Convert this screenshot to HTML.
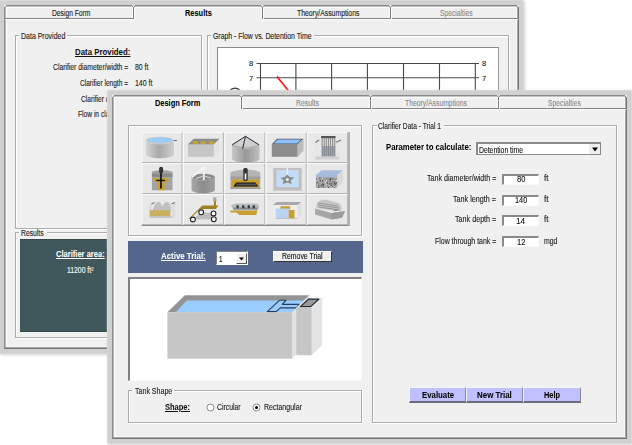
<!DOCTYPE html>
<html><head><meta charset="utf-8"><style>
html,body{margin:0;padding:0;width:632px;height:445px;overflow:hidden;background:#fff;position:relative}
div{position:absolute;box-sizing:border-box}
.t{font-family:"Liberation Sans", sans-serif;white-space:nowrap;transform-origin:0 0;-webkit-text-stroke:0.12px currentColor}
#wrap{left:0;top:0;width:632px;height:445px;filter:blur(0.35px)}
</style></head><body><div id="wrap">
<div style="left:0px;top:1px;width:523px;height:352px;background:#d0d0d0;box-shadow:0 0 0.8px 0.5px #d8d8d8, 1px 1px 3px 0.5px rgba(205,205,205,0.85);border-radius:1px"></div>
<div style="left:4px;top:5px;width:515px;height:344px;background:#f0f0f0;"></div>
<div style="left:6px;top:5px;width:511px;height:1px;background:#888888;"></div>
<div style="left:4px;top:7px;width:1px;height:342px;background:#8c8c8c;"></div>
<div style="left:5px;top:6px;width:1px;height:1px;background:#9a9a9a;"></div>
<div style="left:517px;top:6px;width:1px;height:1px;background:#8a8a8a;"></div>
<div style="left:518px;top:7px;width:1px;height:342px;background:#787878;"></div>
<div style="left:4px;top:348px;width:515px;height:1px;background:#787878;"></div>
<div style="left:5px;top:7px;width:1px;height:341px;background:#bababa;"></div>
<div style="left:6px;top:6px;width:511px;height:1px;background:#c4c4c4;"></div>
<div style="left:517px;top:7px;width:1px;height:341px;background:#a4a4a4;"></div>
<div style="left:5px;top:347px;width:513px;height:1px;background:#a4a4a4;"></div>
<div style="left:6px;top:7px;width:1px;height:340px;background:#fcfcfc;"></div>
<div style="left:6px;top:7px;width:511px;height:1px;background:#fcfcfc;"></div>
<div style="left:516px;top:7px;width:1px;height:340px;background:#f8f8f8;"></div>
<div style="left:6px;top:346px;width:511px;height:1px;background:#f8f8f8;"></div>
<div style="left:4px;top:18px;width:130px;height:1px;background:#828282;"></div>
<div style="left:5px;top:19px;width:128px;height:1px;background:#fcfcfc;"></div>
<div style="left:133px;top:7px;width:1px;height:12px;background:#7e7e7e;"></div>
<div style="left:134px;top:8px;width:1px;height:11px;background:#fcfcfc;"></div>
<div style="left:132px;top:8px;width:1px;height:10px;background:#fafafa;"></div>
<div style="left:132px;top:5px;width:3px;height:1px;background:#d8d8d8;"></div>
<div style="left:132px;top:6px;width:1px;height:1px;background:#8e8e8e;"></div>
<div style="left:134px;top:6px;width:1px;height:1px;background:#8e8e8e;"></div>
<div style="left:133px;top:6px;width:1px;height:1px;background:#e4e4e4;"></div>
<div style="left:262px;top:18px;width:129px;height:1px;background:#828282;"></div>
<div style="left:263px;top:19px;width:127px;height:1px;background:#fcfcfc;"></div>
<div style="left:262px;top:7px;width:1px;height:12px;background:#7e7e7e;"></div>
<div style="left:263px;top:8px;width:1px;height:11px;background:#fcfcfc;"></div>
<div style="left:261px;top:8px;width:1px;height:10px;background:#fafafa;"></div>
<div style="left:261px;top:5px;width:3px;height:1px;background:#d8d8d8;"></div>
<div style="left:261px;top:6px;width:1px;height:1px;background:#8e8e8e;"></div>
<div style="left:263px;top:6px;width:1px;height:1px;background:#8e8e8e;"></div>
<div style="left:262px;top:6px;width:1px;height:1px;background:#e4e4e4;"></div>
<div style="left:390px;top:18px;width:129px;height:1px;background:#828282;"></div>
<div style="left:391px;top:19px;width:127px;height:1px;background:#fcfcfc;"></div>
<div style="left:390px;top:7px;width:1px;height:12px;background:#7e7e7e;"></div>
<div style="left:391px;top:8px;width:1px;height:11px;background:#fcfcfc;"></div>
<div style="left:389px;top:8px;width:1px;height:10px;background:#fafafa;"></div>
<div style="left:389px;top:5px;width:3px;height:1px;background:#d8d8d8;"></div>
<div style="left:389px;top:6px;width:1px;height:1px;background:#8e8e8e;"></div>
<div style="left:391px;top:6px;width:1px;height:1px;background:#8e8e8e;"></div>
<div style="left:390px;top:6px;width:1px;height:1px;background:#e4e4e4;"></div>
<div class="t" style="left:51.60px;top:8.90px;font-size:8.5px;line-height:8.5px;color:#222;transform:scaleX(0.7892);">Design Form</div>
<div class="t" style="left:185.00px;top:9.40px;font-size:8.5px;line-height:8.5px;color:#000;transform:scaleX(0.8724);font-weight:700;-webkit-text-stroke:0.05px currentColor;">Results</div>
<div class="t" style="left:297.00px;top:8.90px;font-size:8.5px;line-height:8.5px;color:#222;transform:scaleX(0.8053);">Theory/Assumptions</div>
<div class="t" style="left:439.60px;top:8.90px;font-size:8.5px;line-height:8.5px;color:#8a8a8a;transform:scaleX(0.7930);">Specialties</div>
<div style="left:15px;top:35px;width:187px;height:1px;background:#acacac;"></div>
<div style="left:16px;top:36px;width:186px;height:1px;background:#ffffff;"></div>
<div style="left:15px;top:35px;width:1px;height:194px;background:#acacac;"></div>
<div style="left:16px;top:36px;width:1px;height:192px;background:#ffffff;"></div>
<div style="left:15px;top:228px;width:187px;height:1px;background:#acacac;"></div>
<div style="left:15px;top:229px;width:188px;height:1px;background:#ffffff;"></div>
<div style="left:201px;top:35px;width:1px;height:194px;background:#acacac;"></div>
<div style="left:202px;top:35px;width:1px;height:195px;background:#ffffff;"></div>
<div style="left:19px;top:35px;width:48px;height:2px;background:#f0f0f0;"></div>
<div class="t" style="left:21.00px;top:32.10px;font-size:8.5px;line-height:8.5px;color:#222;transform:scaleX(0.8223);">Data Provided</div>
<div class="t" style="left:75.30px;top:48.10px;font-size:8.5px;line-height:8.5px;color:#111;transform:scaleX(0.9233);font-weight:700;-webkit-text-stroke:0.05px currentColor;text-decoration:underline;">Data Provided:</div>
<div class="t" style="left:52.80px;top:63.10px;font-size:8.5px;line-height:8.5px;color:#222;transform:scaleX(0.7979);">Clarifier diameter/width =</div>
<div class="t" style="left:134.80px;top:63.10px;font-size:8.5px;line-height:8.5px;color:#222;transform:scaleX(0.8098);">80 ft</div>
<div class="t" style="left:80.00px;top:79.20px;font-size:8.5px;line-height:8.5px;color:#222;transform:scaleX(0.7724);">Clarifier length =</div>
<div class="t" style="left:134.80px;top:79.20px;font-size:8.5px;line-height:8.5px;color:#222;transform:scaleX(0.8176);">140 ft</div>
<div class="t" style="left:81.00px;top:94.50px;font-size:8.5px;line-height:8.5px;color:#222;transform:scaleX(0.7801);">Clarifier depth =</div>
<div class="t" style="left:134.80px;top:94.50px;font-size:8.5px;line-height:8.5px;color:#222;transform:scaleX(0.8098);">14 ft</div>
<div class="t" style="left:77.90px;top:110.00px;font-size:8.5px;line-height:8.5px;color:#222;transform:scaleX(0.7826);">Flow in clarifier =</div>
<div class="t" style="left:134.80px;top:110.00px;font-size:8.5px;line-height:8.5px;color:#222;transform:scaleX(0.7405);">12 mgd</div>
<div style="left:15px;top:232px;width:187px;height:1px;background:#acacac;"></div>
<div style="left:16px;top:233px;width:186px;height:1px;background:#ffffff;"></div>
<div style="left:15px;top:232px;width:1px;height:106px;background:#acacac;"></div>
<div style="left:16px;top:233px;width:1px;height:104px;background:#ffffff;"></div>
<div style="left:15px;top:337px;width:187px;height:1px;background:#acacac;"></div>
<div style="left:15px;top:338px;width:188px;height:1px;background:#ffffff;"></div>
<div style="left:201px;top:232px;width:1px;height:106px;background:#acacac;"></div>
<div style="left:202px;top:232px;width:1px;height:107px;background:#ffffff;"></div>
<div style="left:19px;top:232px;width:28px;height:2px;background:#f0f0f0;"></div>
<div class="t" style="left:21.10px;top:228.90px;font-size:8.5px;line-height:8.5px;color:#222;transform:scaleX(0.7974);">Results</div>
<div style="left:20px;top:239px;width:87px;height:93px;background:#40585c;border-top:1px dotted #2a3a3c;border-bottom:1px dotted #2a3a3c"></div>
<div class="t" style="left:55.50px;top:249.80px;font-size:8.5px;line-height:8.5px;color:#fff;transform:scaleX(0.8885);font-weight:700;-webkit-text-stroke:0.05px currentColor;text-decoration:underline;">Clarifier area:</div>
<div class="t" style="left:66.70px;top:265.90px;font-size:8.5px;line-height:8.5px;color:#fff;transform:scaleX(0.8019);-webkit-text-stroke:0.1px currentColor;">11200 ft&#178;</div>
<div style="left:207px;top:35px;width:302px;height:1px;background:#acacac;"></div>
<div style="left:208px;top:36px;width:301px;height:1px;background:#ffffff;"></div>
<div style="left:207px;top:35px;width:1px;height:303px;background:#acacac;"></div>
<div style="left:208px;top:36px;width:1px;height:301px;background:#ffffff;"></div>
<div style="left:207px;top:337px;width:302px;height:1px;background:#acacac;"></div>
<div style="left:207px;top:338px;width:303px;height:1px;background:#ffffff;"></div>
<div style="left:508px;top:35px;width:1px;height:303px;background:#acacac;"></div>
<div style="left:509px;top:35px;width:1px;height:304px;background:#ffffff;"></div>
<div style="left:211px;top:35px;width:103px;height:2px;background:#f0f0f0;"></div>
<div class="t" style="left:213.10px;top:32.30px;font-size:8.5px;line-height:8.5px;color:#222;transform:scaleX(0.8097);">Graph - Flow vs. Detention Time</div>
<div style="left:217px;top:47px;width:282px;height:290px;background:#ffffff;border-top:1px solid #8a8a8a;border-left:1px solid #8a8a8a;border-right:1px solid #9a9a9a;box-sizing:border-box"></div>
<svg style="position:absolute;left:0;top:0" width="632" height="445"><line x1="260.5" y1="63" x2="260.5" y2="200" stroke="#484848" stroke-width="1.1"/><line x1="295.9" y1="63" x2="295.9" y2="200" stroke="#484848" stroke-width="1.1"/><line x1="331.6" y1="63" x2="331.6" y2="200" stroke="#484848" stroke-width="1.1"/><line x1="367.4" y1="63" x2="367.4" y2="200" stroke="#484848" stroke-width="1.1"/><line x1="403.5" y1="63" x2="403.5" y2="200" stroke="#484848" stroke-width="1.1"/><line x1="439.5" y1="63" x2="439.5" y2="200" stroke="#484848" stroke-width="1.1"/><line x1="475.3" y1="63" x2="475.3" y2="200" stroke="#484848" stroke-width="1.1"/><line x1="256.5" y1="63.5" x2="479" y2="63.5" stroke="#484848" stroke-width="1.1"/><line x1="256.5" y1="77.8" x2="479" y2="77.8" stroke="#484848" stroke-width="1.1"/><line x1="256.5" y1="92.2" x2="479" y2="92.2" stroke="#484848" stroke-width="1.1"/><line x1="256.5" y1="106.6" x2="479" y2="106.6" stroke="#484848" stroke-width="1.1"/><line x1="276.9" y1="76.5" x2="300" y2="105" stroke="#ff1010" stroke-width="1.6"/><path d="M230.5 89.8 Q235 86.3 239.5 89.8" stroke="#333" stroke-width="1.3" fill="none"/></svg>
<div class="t" style="left:248.70px;top:60.35px;font-size:7.5px;line-height:7.5px;color:#1a2030;transform:scaleX(1.0067);-webkit-text-stroke:0.1px currentColor;">8</div>
<div class="t" style="left:481.90px;top:60.35px;font-size:7.5px;line-height:7.5px;color:#1a2030;transform:scaleX(1.0067);-webkit-text-stroke:0.1px currentColor;">8</div>
<div class="t" style="left:248.70px;top:74.75px;font-size:7.5px;line-height:7.5px;color:#1a2030;transform:scaleX(1.0067);-webkit-text-stroke:0.1px currentColor;">7</div>
<div class="t" style="left:481.90px;top:74.75px;font-size:7.5px;line-height:7.5px;color:#1a2030;transform:scaleX(1.0067);-webkit-text-stroke:0.1px currentColor;">7</div>
<div class="t" style="left:248.70px;top:89.15px;font-size:7.5px;line-height:7.5px;color:#1a2030;transform:scaleX(1.0067);-webkit-text-stroke:0.1px currentColor;">6</div>
<div class="t" style="left:481.90px;top:89.15px;font-size:7.5px;line-height:7.5px;color:#1a2030;transform:scaleX(1.0067);-webkit-text-stroke:0.1px currentColor;">6</div>
<div style="left:108px;top:91px;width:523px;height:352px;background:#d0d0d0;box-shadow:0 0 0.8px 0.5px #d8d8d8, 1px 1px 3px 0.5px rgba(205,205,205,0.85);border-radius:1px"></div>
<div style="left:112px;top:95px;width:515px;height:344px;background:#f0f0f0;"></div>
<div style="left:114px;top:95px;width:511px;height:1px;background:#888888;"></div>
<div style="left:112px;top:97px;width:1px;height:342px;background:#8c8c8c;"></div>
<div style="left:113px;top:96px;width:1px;height:1px;background:#9a9a9a;"></div>
<div style="left:625px;top:96px;width:1px;height:1px;background:#8a8a8a;"></div>
<div style="left:626px;top:97px;width:1px;height:342px;background:#787878;"></div>
<div style="left:112px;top:438px;width:515px;height:1px;background:#787878;"></div>
<div style="left:113px;top:97px;width:1px;height:341px;background:#bababa;"></div>
<div style="left:114px;top:96px;width:511px;height:1px;background:#c4c4c4;"></div>
<div style="left:625px;top:97px;width:1px;height:341px;background:#a4a4a4;"></div>
<div style="left:113px;top:437px;width:513px;height:1px;background:#a4a4a4;"></div>
<div style="left:114px;top:97px;width:1px;height:340px;background:#fcfcfc;"></div>
<div style="left:114px;top:97px;width:511px;height:1px;background:#fcfcfc;"></div>
<div style="left:624px;top:97px;width:1px;height:340px;background:#f8f8f8;"></div>
<div style="left:114px;top:436px;width:511px;height:1px;background:#f8f8f8;"></div>
<div style="left:241px;top:108px;width:130px;height:1px;background:#828282;"></div>
<div style="left:242px;top:109px;width:128px;height:1px;background:#fcfcfc;"></div>
<div style="left:241px;top:97px;width:1px;height:12px;background:#7e7e7e;"></div>
<div style="left:242px;top:98px;width:1px;height:11px;background:#fcfcfc;"></div>
<div style="left:240px;top:98px;width:1px;height:10px;background:#fafafa;"></div>
<div style="left:240px;top:95px;width:3px;height:1px;background:#d8d8d8;"></div>
<div style="left:240px;top:96px;width:1px;height:1px;background:#8e8e8e;"></div>
<div style="left:242px;top:96px;width:1px;height:1px;background:#8e8e8e;"></div>
<div style="left:241px;top:96px;width:1px;height:1px;background:#e4e4e4;"></div>
<div style="left:370px;top:108px;width:129px;height:1px;background:#828282;"></div>
<div style="left:371px;top:109px;width:127px;height:1px;background:#fcfcfc;"></div>
<div style="left:370px;top:97px;width:1px;height:12px;background:#7e7e7e;"></div>
<div style="left:371px;top:98px;width:1px;height:11px;background:#fcfcfc;"></div>
<div style="left:369px;top:98px;width:1px;height:10px;background:#fafafa;"></div>
<div style="left:369px;top:95px;width:3px;height:1px;background:#d8d8d8;"></div>
<div style="left:369px;top:96px;width:1px;height:1px;background:#8e8e8e;"></div>
<div style="left:371px;top:96px;width:1px;height:1px;background:#8e8e8e;"></div>
<div style="left:370px;top:96px;width:1px;height:1px;background:#e4e4e4;"></div>
<div style="left:498px;top:108px;width:129px;height:1px;background:#828282;"></div>
<div style="left:499px;top:109px;width:127px;height:1px;background:#fcfcfc;"></div>
<div style="left:498px;top:97px;width:1px;height:12px;background:#7e7e7e;"></div>
<div style="left:499px;top:98px;width:1px;height:11px;background:#fcfcfc;"></div>
<div style="left:497px;top:98px;width:1px;height:10px;background:#fafafa;"></div>
<div style="left:497px;top:95px;width:3px;height:1px;background:#d8d8d8;"></div>
<div style="left:497px;top:96px;width:1px;height:1px;background:#8e8e8e;"></div>
<div style="left:499px;top:96px;width:1px;height:1px;background:#8e8e8e;"></div>
<div style="left:498px;top:96px;width:1px;height:1px;background:#e4e4e4;"></div>
<div class="t" style="left:155.20px;top:99.40px;font-size:8.5px;line-height:8.5px;color:#000;transform:scaleX(0.8719);font-weight:700;-webkit-text-stroke:0.05px currentColor;">Design Form</div>
<div class="t" style="left:295.80px;top:98.90px;font-size:8.5px;line-height:8.5px;color:#8a8a8a;transform:scaleX(0.8044);">Results</div>
<div class="t" style="left:405.20px;top:98.90px;font-size:8.5px;line-height:8.5px;color:#8a8a8a;transform:scaleX(0.8002);">Theory/Assumptions</div>
<div class="t" style="left:547.50px;top:98.90px;font-size:8.5px;line-height:8.5px;color:#8a8a8a;transform:scaleX(0.8003);">Specialties</div>
<div style="left:128px;top:125px;width:234px;height:1px;background:#acacac;"></div>
<div style="left:129px;top:126px;width:233px;height:1px;background:#ffffff;"></div>
<div style="left:128px;top:125px;width:1px;height:111px;background:#acacac;"></div>
<div style="left:129px;top:126px;width:1px;height:109px;background:#ffffff;"></div>
<div style="left:128px;top:235px;width:234px;height:1px;background:#acacac;"></div>
<div style="left:128px;top:236px;width:235px;height:1px;background:#ffffff;"></div>
<div style="left:361px;top:125px;width:1px;height:111px;background:#acacac;"></div>
<div style="left:362px;top:125px;width:1px;height:112px;background:#ffffff;"></div>
<svg style="position:absolute;left:0;top:0" width="632" height="445"><defs><linearGradient id="cylg" x1="0" x2="1"><stop offset="0" stop-color="#d4d4d4"/><stop offset="0.45" stop-color="#a8a8a8"/><stop offset="1" stop-color="#cfcfcf"/></linearGradient><linearGradient id="cylg2" x1="0" x2="1"><stop offset="0" stop-color="#c8c8c8"/><stop offset="0.5" stop-color="#989898"/><stop offset="1" stop-color="#c0c0c0"/></linearGradient><linearGradient id="cylg3" x1="0" x2="1"><stop offset="0" stop-color="#a8a8a8"/><stop offset="0.5" stop-color="#8c8c8c"/><stop offset="1" stop-color="#a0a0a0"/></linearGradient></defs><g transform="translate(141.5,132)"><rect x="0" y="0" width="41" height="31" fill="#e8e8e8"/><path d="M0.5 30.5V0.5H40.5" stroke="#fbfbfb" stroke-width="1" fill="none"/><path d="M40.5 0.5V30.5H0.5" stroke="#b4b4b4" stroke-width="1" fill="none"/><path d="M4.5 8.5 A14 3.8 0 0 0 32.5 8.5 V22.5 A14 3.8 0 0 1 4.5 22.5 Z" fill="url(#cylg)"/><ellipse cx="18.5" cy="8.5" rx="14" ry="3.8" fill="#c8c8c8"/><ellipse cx="18.5" cy="8.3" rx="12.8" ry="2.8" fill="#9cccfa"/><path d="M32.5 8.5h3" stroke="#777" stroke-width="1.2"/></g><g transform="translate(182.9,132)"><rect x="0" y="0" width="41" height="31" fill="#e8e8e8"/><path d="M0.5 30.5V0.5H40.5" stroke="#fbfbfb" stroke-width="1" fill="none"/><path d="M40.5 0.5V30.5H0.5" stroke="#b4b4b4" stroke-width="1" fill="none"/><path d="M5 12.6H31V24.8H5Z" fill="#c6c6c6"/><path d="M5 12.6H31L36.7 6.8H10.8Z" fill="#8c8c8c"/><path d="M31 12.6L36.7 6.8V18.7L31 24.8Z" fill="#e2e2e2"/><ellipse cx="12.5" cy="10.6" rx="3" ry="1.5" fill="#c8a030"/><ellipse cx="20.3" cy="10.6" rx="3" ry="1.5" fill="#c8a030"/><ellipse cx="28.6" cy="10.6" rx="3" ry="1.5" fill="#c8a030"/></g><g transform="translate(224.3,132)"><rect x="0" y="0" width="41" height="31" fill="#e8e8e8"/><path d="M0.5 30.5V0.5H40.5" stroke="#fbfbfb" stroke-width="1" fill="none"/><path d="M40.5 0.5V30.5H0.5" stroke="#b4b4b4" stroke-width="1" fill="none"/><path d="M7.599999999999998 13 A13.8 3.5 0 0 0 35.2 13 V27 A13.8 3.5 0 0 1 7.599999999999998 27 Z" fill="url(#cylg2)"/><ellipse cx="21.4" cy="13" rx="13.8" ry="3.5" fill="#b0b0b0"/><path d="M7.9 12.8L21.2 4.3L34.6 12.8Q21 17 7.9 12.8Z" fill="#d0d0d0"/><path d="M7.9 12.8L21.2 4.3L34.6 12.8" stroke="#2a2a2a" stroke-width="1" fill="none"/><path d="M21.2 4.3L18.3 17" stroke="#2a3a4a" stroke-width="1.1"/></g><g transform="translate(265.7,132)"><rect x="0" y="0" width="41" height="31" fill="#e8e8e8"/><path d="M0.5 30.5V0.5H40.5" stroke="#fbfbfb" stroke-width="1" fill="none"/><path d="M40.5 0.5V30.5H0.5" stroke="#b4b4b4" stroke-width="1" fill="none"/><path d="M6.1 12.2H32V24.8H6.1Z" fill="#8c8c8c"/><path d="M6.1 12.2H32L37.8 6.8H11.5Z" fill="#555"/><path d="M8 11.6H31.2L35.6 7.6H12.2Z" fill="#8cc4ff"/><path d="M32 12.2L37.8 6.8V18.7L32 24.8Z" fill="#bcbcbc"/></g><g transform="translate(307.1,132)"><rect x="0" y="0" width="41" height="31" fill="#e8e8e8"/><path d="M0.5 30.5V0.5H40.5" stroke="#fbfbfb" stroke-width="1" fill="none"/><path d="M40.5 0.5V30.5H0.5" stroke="#b4b4b4" stroke-width="1" fill="none"/><path d="M8.3 10.5L12 8V27H8.3Z" fill="#e6e6e6"/><path d="M8.3 10.5L12 8" stroke="#777" stroke-width="1.2"/><path d="M28.4 10.5L34 8V27H28.4Z" fill="#e6e6e6"/><path d="M28.4 10.5L34 8" stroke="#777" stroke-width="1.2"/><rect x="14" y="4" width="14.4" height="20.5" fill="#d8d8d8"/><rect x="15" y="14" width="13" height="10.5" fill="#8fa4d0"/><rect x="14" y="4" width="14.4" height="2.2" fill="#555"/><rect x="14.6" y="6" width="0.9" height="18.5" fill="#888"/><rect x="16.7" y="6" width="0.9" height="18.5" fill="#888"/><rect x="18.8" y="6" width="0.9" height="18.5" fill="#888"/><rect x="20.9" y="6" width="0.9" height="18.5" fill="#888"/><rect x="23.0" y="6" width="0.9" height="18.5" fill="#888"/><rect x="25.1" y="6" width="0.9" height="18.5" fill="#888"/><rect x="27.200000000000003" y="6" width="0.9" height="18.5" fill="#888"/><rect x="8.3" y="24.5" width="23.7" height="3" fill="#cfcfcf"/></g><g transform="translate(141.5,163)"><rect x="0" y="0" width="41" height="31" fill="#e8e8e8"/><path d="M0.5 30.5V0.5H40.5" stroke="#fbfbfb" stroke-width="1" fill="none"/><path d="M40.5 0.5V30.5H0.5" stroke="#b4b4b4" stroke-width="1" fill="none"/><path d="M10.4 8.5Q20 6 31 8.5V27.3H10.4Z" fill="#a4a4a4"/><rect x="10.4" y="10.5" width="20.6" height="3.5" fill="#8a8a8a"/><path d="M12.6 15.1H27V18.7H23V27.3H15.5V18.7H12.6Z" fill="#c8a030"/><rect x="18.6" y="9" width="1.7" height="16.5" fill="#111"/><rect x="17.6" y="3.8" width="4" height="6.6" rx="2" fill="#333"/><rect x="14.7" y="16.8" width="9" height="1.3" fill="#111"/></g><g transform="translate(182.9,163)"><rect x="0" y="0" width="41" height="31" fill="#e8e8e8"/><path d="M0.5 30.5V0.5H40.5" stroke="#fbfbfb" stroke-width="1" fill="none"/><path d="M40.5 0.5V30.5H0.5" stroke="#b4b4b4" stroke-width="1" fill="none"/><path d="M8.600000000000001 14 A11.7 3.2 0 0 0 32.0 14 V27 A11.7 3.2 0 0 1 8.600000000000001 27 Z" fill="url(#cylg3)"/><ellipse cx="20.3" cy="14" rx="11.7" ry="3.2" fill="#8a8a8a"/><path d="M9 14.4L20.9 4.3V17.3" stroke="#f4f4f4" stroke-width="1.8" fill="none"/><path d="M13 15.5L20.9 13L28 15" stroke="#d0d0d0" stroke-width="1.2" fill="none"/></g><g transform="translate(224.3,163)"><rect x="0" y="0" width="41" height="31" fill="#e8e8e8"/><path d="M0.5 30.5V0.5H40.5" stroke="#fbfbfb" stroke-width="1" fill="none"/><path d="M40.5 0.5V30.5H0.5" stroke="#b4b4b4" stroke-width="1" fill="none"/><path d="M6.1 9Q21 4 36 9V25.9H6.1Z" fill="#b4b4b4"/><rect x="6.1" y="13.5" width="29.9" height="3" fill="#a0a0a0"/><rect x="7" y="16.5" width="28" height="8" fill="#c8a030"/><path d="M9 23.5L12 19.5H31L34 23.5Z" fill="#111"/><rect x="12" y="20.5" width="20" height="2" fill="#555"/><rect x="19" y="5" width="4.4" height="13" rx="1.5" fill="#333"/><rect x="20.4" y="10.5" width="1.6" height="6" fill="#fff"/><rect x="6.1" y="24.5" width="29.9" height="1.4" fill="#999"/></g><g transform="translate(265.7,163)"><rect x="0" y="0" width="41" height="31" fill="#e8e8e8"/><path d="M0.5 30.5V0.5H40.5" stroke="#fbfbfb" stroke-width="1" fill="none"/><path d="M40.5 0.5V30.5H0.5" stroke="#b4b4b4" stroke-width="1" fill="none"/><rect x="7.6" y="5" width="28.4" height="22.7" fill="#c0c0c0"/><rect x="10.8" y="7" width="22.2" height="17" fill="#c4dcf4"/><rect x="21" y="5" width="1.2" height="9" fill="#f4f4f4"/><path d="M15 15L19 14L21.6 11.5L24 14L28.5 14.5L25 17.5L26 21L21.6 19.5L17 21L18 17.5Z" fill="#8a8a8a"/><circle cx="21.6" cy="16.5" r="1.6" fill="#eee"/></g><g transform="translate(307.1,163)"><rect x="0" y="0" width="41" height="31" fill="#e8e8e8"/><path d="M0.5 30.5V0.5H40.5" stroke="#fbfbfb" stroke-width="1" fill="none"/><path d="M40.5 0.5V30.5H0.5" stroke="#b4b4b4" stroke-width="1" fill="none"/><path d="M9 11.9H30.2V24.8H9Z" fill="#9a9a9a"/><path d="M9 11.9H30.2L35.6 7.2H14.4Z" fill="#a8bce0"/><rect x="9" y="11.9" width="21.2" height="2.5" fill="#a8b8d8"/><path d="M30.2 11.9L35.6 7.2V20L30.2 24.8Z" fill="#d8d8d8"/><rect x="13.9" y="19.8" width="1" height="1" fill="#ddd"/><rect x="27.8" y="19.1" width="1" height="1" fill="#444"/><rect x="10.3" y="14.6" width="1" height="1" fill="#eee"/><rect x="14.3" y="16.8" width="1" height="1" fill="#eee"/><rect x="20.1" y="19.9" width="1" height="1" fill="#eee"/><rect x="22.1" y="16.0" width="1" height="1" fill="#555"/><rect x="26.8" y="19.6" width="1" height="1" fill="#333"/><rect x="22.8" y="15.1" width="1" height="1" fill="#444"/><rect x="9.9" y="22.1" width="1" height="1" fill="#ddd"/><rect x="18.7" y="21.5" width="1" height="1" fill="#eee"/><rect x="23.6" y="23.5" width="1" height="1" fill="#eee"/><rect x="23.9" y="20.2" width="1" height="1" fill="#555"/><rect x="27.0" y="15.5" width="1" height="1" fill="#555"/><rect x="19.1" y="17.0" width="1" height="1" fill="#eee"/><rect x="25.0" y="22.9" width="1" height="1" fill="#eee"/><rect x="19.4" y="18.3" width="1" height="1" fill="#ddd"/><rect x="19.9" y="18.5" width="1" height="1" fill="#555"/><rect x="27.5" y="21.2" width="1" height="1" fill="#333"/><rect x="26.6" y="24.2" width="1" height="1" fill="#555"/><rect x="23.3" y="17.7" width="1" height="1" fill="#444"/><rect x="27.5" y="20.1" width="1" height="1" fill="#555"/><rect x="22.0" y="24.2" width="1" height="1" fill="#ddd"/><rect x="14.8" y="15.1" width="1" height="1" fill="#eee"/><rect x="10.8" y="22.3" width="1" height="1" fill="#eee"/><rect x="27.4" y="14.7" width="1" height="1" fill="#eee"/><rect x="24.8" y="23.1" width="1" height="1" fill="#333"/><rect x="21.4" y="22.0" width="1" height="1" fill="#eee"/><rect x="23.7" y="17.7" width="1" height="1" fill="#ddd"/><rect x="19.4" y="24.3" width="1" height="1" fill="#ddd"/><rect x="9.1" y="15.6" width="1" height="1" fill="#444"/><rect x="9.6" y="16.4" width="1" height="1" fill="#eee"/><rect x="15.0" y="17.1" width="1" height="1" fill="#333"/><rect x="29.1" y="17.8" width="1" height="1" fill="#ddd"/><rect x="28.7" y="23.3" width="1" height="1" fill="#eee"/><rect x="16.7" y="23.0" width="1" height="1" fill="#eee"/><rect x="22.2" y="20.3" width="1" height="1" fill="#444"/><rect x="11.1" y="24.0" width="1" height="1" fill="#444"/><rect x="14.6" y="20.7" width="1" height="1" fill="#555"/><rect x="28.2" y="18.8" width="1" height="1" fill="#ddd"/><rect x="19.7" y="19.9" width="1" height="1" fill="#333"/><rect x="25.2" y="24.2" width="1" height="1" fill="#ddd"/><rect x="9.4" y="20.5" width="1" height="1" fill="#555"/><rect x="10.2" y="20.6" width="1" height="1" fill="#eee"/><rect x="16.2" y="23.5" width="1" height="1" fill="#444"/><rect x="23.5" y="21.7" width="1" height="1" fill="#333"/><rect x="21.1" y="23.9" width="1" height="1" fill="#333"/><rect x="28.7" y="17.0" width="1" height="1" fill="#eee"/><rect x="15.1" y="20.4" width="1" height="1" fill="#555"/><rect x="16.5" y="17.6" width="1" height="1" fill="#ddd"/><rect x="26.3" y="17.1" width="1" height="1" fill="#eee"/><rect x="11.1" y="22.5" width="1" height="1" fill="#444"/><rect x="23.0" y="15.8" width="1" height="1" fill="#444"/><rect x="13.6" y="22.4" width="1" height="1" fill="#555"/><rect x="15.7" y="21.1" width="1" height="1" fill="#333"/><rect x="11.1" y="17.7" width="1" height="1" fill="#ddd"/><rect x="22.8" y="16.7" width="1" height="1" fill="#555"/><rect x="10.6" y="21.8" width="1" height="1" fill="#555"/><rect x="27.1" y="18.9" width="1" height="1" fill="#555"/><rect x="25.1" y="14.8" width="1" height="1" fill="#555"/><rect x="15.5" y="22.7" width="1" height="1" fill="#444"/><rect x="12.8" y="17.2" width="1" height="1" fill="#333"/><rect x="25.5" y="17.9" width="1" height="1" fill="#555"/><rect x="17.6" y="19.6" width="1" height="1" fill="#ddd"/><rect x="18.5" y="20.7" width="1" height="1" fill="#ddd"/><rect x="17.6" y="18.5" width="1" height="1" fill="#eee"/><rect x="12.2" y="14.5" width="1" height="1" fill="#444"/><rect x="29.2" y="18.8" width="1" height="1" fill="#555"/><rect x="9.7" y="19.0" width="1" height="1" fill="#444"/><rect x="28.7" y="19.8" width="1" height="1" fill="#555"/><rect x="26.7" y="22.9" width="1" height="1" fill="#ddd"/></g><g transform="translate(141.5,194)"><rect x="0" y="0" width="41" height="31" fill="#e8e8e8"/><path d="M0.5 30.5V0.5H40.5" stroke="#fbfbfb" stroke-width="1" fill="none"/><path d="M40.5 0.5V30.5H0.5" stroke="#b4b4b4" stroke-width="1" fill="none"/><path d="M7.2 12L10.5 9V23.7H7.2Z" fill="#dcdcdc"/><path d="M30 12L33.8 9V23.7H30Z" fill="#dcdcdc"/><path d="M11 17Q13 8 17 8Q21 8 21 17Z" fill="#c0c0c0"/><path d="M19.5 17Q21.5 8 25.5 8Q29.5 8 29.5 17Z" fill="#c0c0c0"/><path d="M10 10L13 8.5" stroke="#777" stroke-width="1.2"/><path d="M30 10L33.5 8.5" stroke="#777" stroke-width="1.2"/><rect x="8.3" y="16.2" width="20.5" height="6.1" fill="#c8b060"/><rect x="8.3" y="22.3" width="22" height="1.4" fill="#bbb"/></g><g transform="translate(182.9,194)"><rect x="0" y="0" width="41" height="31" fill="#e8e8e8"/><path d="M0.5 30.5V0.5H40.5" stroke="#fbfbfb" stroke-width="1" fill="none"/><path d="M40.5 0.5V30.5H0.5" stroke="#b4b4b4" stroke-width="1" fill="none"/><path d="M10 25.5L18.3 18.3L30.6 19.4L30.9 25.2Z" fill="#bdbdbd"/><path d="M5.8 24.8L19.4 11.5H35.6L33 15.1H17.3L7 25Z" fill="#a08020"/><rect x="30.2" y="3.2" width="3.4" height="4" fill="#aaa"/><rect x="31" y="7" width="2" height="5" fill="#a08020"/><circle cx="18.3" cy="18.3" r="2.4" fill="#fff" stroke="#222" stroke-width="1.1"/><circle cx="30.6" cy="19.4" r="2.4" fill="#fff" stroke="#222" stroke-width="1.1"/><circle cx="10" cy="25.5" r="2.4" fill="#fff" stroke="#222" stroke-width="1.1"/><circle cx="30.9" cy="25.2" r="2.4" fill="#fff" stroke="#222" stroke-width="1.1"/></g><g transform="translate(224.3,194)"><rect x="0" y="0" width="41" height="31" fill="#e8e8e8"/><path d="M0.5 30.5V0.5H40.5" stroke="#fbfbfb" stroke-width="1" fill="none"/><path d="M40.5 0.5V30.5H0.5" stroke="#b4b4b4" stroke-width="1" fill="none"/><path d="M6.5 11L12 9.4H33Q37 13 33 16.5H9.5Z" fill="#bcbcbc"/><rect x="9" y="13.5" width="24" height="2" fill="#888"/><ellipse cx="13.3" cy="12.8" rx="1.3" ry="1.8" fill="#2a4050"/><ellipse cx="19" cy="12.8" rx="1.3" ry="1.8" fill="#2a4050"/><ellipse cx="24.5" cy="12.8" rx="1.3" ry="1.8" fill="#2a4050"/><ellipse cx="29.5" cy="12.8" rx="1.3" ry="1.8" fill="#2a4050"/><path d="M6.1 16.5H33L32 20.9H15L12 18.5H6.1Z" fill="#c8a030"/></g><g transform="translate(265.7,194)"><rect x="0" y="0" width="41" height="31" fill="#e8e8e8"/><path d="M0.5 30.5V0.5H40.5" stroke="#fbfbfb" stroke-width="1" fill="none"/><path d="M40.5 0.5V30.5H0.5" stroke="#b4b4b4" stroke-width="1" fill="none"/><path d="M7.2 11L11 7.9H35.6L32 11Z" fill="#a8a8a8"/><rect x="7.2" y="11" width="24.8" height="13.8" fill="#ececec"/><path d="M32 11L35.6 7.9V21L32 24.8Z" fill="#dedede"/><rect x="14.8" y="12.2" width="9.7" height="3" fill="#c8a030"/><rect x="10" y="14.5" width="13" height="10" fill="#b8d4f0"/><rect x="23" y="16" width="5.8" height="8.5" fill="#c8a030"/><rect x="10" y="24" width="22" height="0.8" fill="#bbb"/></g><g transform="translate(307.1,194)"><rect x="0" y="0" width="41" height="31" fill="#e8e8e8"/><path d="M0.5 30.5V0.5H40.5" stroke="#fbfbfb" stroke-width="1" fill="none"/><path d="M40.5 0.5V30.5H0.5" stroke="#b4b4b4" stroke-width="1" fill="none"/><path d="M10 9Q14 5 20 6L31.5 9Q36 12 33.6 17.6L9 14Z" fill="#c4c4c4"/><path d="M11 9L31 12M11 11L32 14M11.5 13L32.5 16" stroke="#8c8c8c" stroke-width="0.8"/><path d="M8 14.5L24.4 19.1L37.8 17.2L34.8 23.7L24.4 25.6L8 20.6Z" fill="#a6a6a6"/><path d="M24.4 19.1L37.8 17.2L34.8 23.7L24.4 25.6Z" fill="#9a9a9a"/><path d="M26 17Q28.5 13.5 31 16.5" fill="#888"/></g><path d="M349 132V225.5H141.5" stroke="#8a8a8a" stroke-width="1.2" fill="none"/></svg>
<div style="left:128px;top:241px;width:235px;height:32px;background:#54668c;"></div>
<div class="t" style="left:161.30px;top:252.20px;font-size:8.5px;line-height:8.5px;color:#fff;transform:scaleX(0.9276);font-weight:700;-webkit-text-stroke:0.05px currentColor;text-decoration:underline;">Active Trial:</div>
<div style="left:216px;top:251px;width:32px;height:14px;background:#fff;border-top:1px solid #808080;border-left:1px solid #808080;border-bottom:1px solid #fff;border-right:1px solid #fff"></div>
<div style="left:236px;top:253px;width:11px;height:11px;background:#efefef;border-top:1px solid #fff;border-left:1px solid #fff;border-bottom:1px solid #555;border-right:1px solid #555"></div>
<svg style="position:absolute;left:238px;top:256px" width="7" height="5"><path d="M1 1.5h5l-2.5 3z" fill="#000"/></svg>
<div class="t" style="left:219.00px;top:254.90px;font-size:8.5px;line-height:8.5px;color:#000;transform:scaleX(0.7393);">1</div>
<div style="left:273px;top:251px;width:59px;height:11px;background:#f0f0f0;border-top:1px solid #fff;border-left:1px solid #fff;border-bottom:1px solid #333;border-right:1px solid #333"></div>
<div class="t" style="left:282.40px;top:251.90px;font-size:8.5px;line-height:8.5px;color:#111;transform:scaleX(0.8107);">Remove Trial</div>
<div style="left:128px;top:277px;width:234px;height:104px;background:#fff;border-top:2px solid #808080;border-left:2px solid #808080;border-bottom:1px solid #f8f8f8;border-right:1px solid #f8f8f8"></div>
<svg style="position:absolute;left:0;top:0" width="632" height="445"><path d="M167.4 312.3L184.8 295.3H309.3L292 312.3Z" fill="#949494"/><path d="M175.8 312.3L186.6 300.6H304L292 312.3Z" fill="#99ccff"/><path d="M267.3 311.6L279.4 300.3H286L282.2 304.4H299.4L296.2 307.9H280.5L276 311.6Z" fill="#99ccff" stroke="#2a3c5c" stroke-width="1.1" stroke-linejoin="round"/><rect x="167.4" y="312.3" width="124.6" height="46.4" fill="#c6c6c6"/><path d="M292 312.3L309.3 295.3V342L292 358.7Z" fill="#e2e2e2"/><path d="M296.3 307.4H311.8L322.2 298H307.2Z" fill="#e0e0e0"/><path d="M300.4 306.6H310.6L318.8 299.2H308.4Z" fill="#9a9a9a" stroke="#1e2e3a" stroke-width="1.2" stroke-linejoin="round"/><rect x="296.3" y="307.4" width="15.5" height="47.8" fill="#c6c6c6"/><path d="M311.8 307.4L322.2 298V345L311.8 355.2Z" fill="#e4e4e4"/></svg>
<div style="left:128px;top:390px;width:234px;height:1px;background:#acacac;"></div>
<div style="left:129px;top:391px;width:233px;height:1px;background:#ffffff;"></div>
<div style="left:128px;top:390px;width:1px;height:33px;background:#acacac;"></div>
<div style="left:129px;top:391px;width:1px;height:31px;background:#ffffff;"></div>
<div style="left:128px;top:422px;width:234px;height:1px;background:#acacac;"></div>
<div style="left:128px;top:423px;width:235px;height:1px;background:#ffffff;"></div>
<div style="left:361px;top:390px;width:1px;height:33px;background:#acacac;"></div>
<div style="left:362px;top:390px;width:1px;height:34px;background:#ffffff;"></div>
<div style="left:132px;top:390px;width:42px;height:2px;background:#f0f0f0;"></div>
<div class="t" style="left:134.90px;top:386.80px;font-size:8.5px;line-height:8.5px;color:#222;transform:scaleX(0.8306);">Tank Shape</div>
<div class="t" style="left:165.00px;top:402.50px;font-size:8.5px;line-height:8.5px;color:#111;transform:scaleX(0.8820);font-weight:700;-webkit-text-stroke:0.05px currentColor;text-decoration:underline;">Shape:</div>
<svg style="position:absolute;left:206px;top:403px" width="9" height="9"><circle cx="4.5" cy="4.5" r="3.5" fill="#fff" stroke="#888" stroke-width="1"/></svg>
<svg style="position:absolute;left:252px;top:403px" width="9" height="9"><circle cx="4.5" cy="4.5" r="3.5" fill="#fff" stroke="#888" stroke-width="1"/><circle cx="4.5" cy="4.5" r="1.5" fill="#000"/></svg>
<div class="t" style="left:217.40px;top:403.20px;font-size:8.5px;line-height:8.5px;color:#222;transform:scaleX(0.8026);">Circular</div>
<div class="t" style="left:264.40px;top:403.20px;font-size:8.5px;line-height:8.5px;color:#222;transform:scaleX(0.8267);">Rectangular</div>
<div style="left:372px;top:125px;width:245px;height:1px;background:#acacac;"></div>
<div style="left:373px;top:126px;width:244px;height:1px;background:#ffffff;"></div>
<div style="left:372px;top:125px;width:1px;height:298px;background:#acacac;"></div>
<div style="left:373px;top:126px;width:1px;height:296px;background:#ffffff;"></div>
<div style="left:372px;top:422px;width:245px;height:1px;background:#acacac;"></div>
<div style="left:372px;top:423px;width:246px;height:1px;background:#ffffff;"></div>
<div style="left:616px;top:125px;width:1px;height:298px;background:#acacac;"></div>
<div style="left:617px;top:125px;width:1px;height:299px;background:#ffffff;"></div>
<div style="left:377px;top:125px;width:67px;height:2px;background:#f0f0f0;"></div>
<div class="t" style="left:378.40px;top:122.30px;font-size:8.5px;line-height:8.5px;color:#222;transform:scaleX(0.7844);">Clarifier Data - Trial 1</div>
<div class="t" style="left:386.00px;top:143.40px;font-size:8.5px;line-height:8.5px;color:#000;transform:scaleX(0.9118);font-weight:700;-webkit-text-stroke:0.05px currentColor;">Parameter to calculate:</div>
<div style="left:476px;top:142px;width:125px;height:13px;background:#fff;border:1px solid #8a8a8a;border-top:2px solid #8a8a8a;border-left:2px solid #8a8a8a"></div>
<div style="left:589px;top:144px;width:11px;height:10px;background:#efefef;"></div>
<svg style="position:absolute;left:591px;top:147px" width="8" height="5"><path d="M1 0.5h6l-3 4z" fill="#000"/></svg>
<div class="t" style="left:479.20px;top:145.50px;font-size:8.5px;line-height:8.5px;color:#111;transform:scaleX(0.8027);">Detention time</div>
<div class="t" style="left:426.80px;top:174.10px;font-size:8.5px;line-height:8.5px;color:#222;transform:scaleX(0.8369);">Tank diameter/width =</div>
<div style="left:502px;top:174px;width:37px;height:11px;background:#fff;border-top:2px solid #8a8a8a;border-left:2px solid #8a8a8a;border-bottom:1px solid #fafafa;border-right:1px solid #fafafa"></div>
<div class="t" style="left:516.55px;top:175.40px;font-size:8.5px;line-height:8.5px;color:#111;transform:scaleX(0.8977);">80</div>
<div class="t" style="left:543.70px;top:174.10px;font-size:8.5px;line-height:8.5px;color:#222;transform:scaleX(0.9505);">ft</div>
<div class="t" style="left:453.20px;top:194.60px;font-size:8.5px;line-height:8.5px;color:#222;transform:scaleX(0.8462);">Tank length =</div>
<div style="left:502px;top:194.5px;width:37px;height:11px;background:#fff;border-top:2px solid #8a8a8a;border-left:2px solid #8a8a8a;border-bottom:1px solid #fafafa;border-right:1px solid #fafafa"></div>
<div class="t" style="left:514.65px;top:195.90px;font-size:8.5px;line-height:8.5px;color:#111;transform:scaleX(0.8670);">140</div>
<div class="t" style="left:543.70px;top:194.60px;font-size:8.5px;line-height:8.5px;color:#222;transform:scaleX(0.9505);">ft</div>
<div class="t" style="left:454.90px;top:215.30px;font-size:8.5px;line-height:8.5px;color:#222;transform:scaleX(0.8442);">Tank depth =</div>
<div style="left:502px;top:215px;width:37px;height:11px;background:#fff;border-top:2px solid #8a8a8a;border-left:2px solid #8a8a8a;border-bottom:1px solid #fafafa;border-right:1px solid #fafafa"></div>
<div class="t" style="left:516.25px;top:216.60px;font-size:8.5px;line-height:8.5px;color:#111;transform:scaleX(0.9611);">14</div>
<div class="t" style="left:543.70px;top:215.30px;font-size:8.5px;line-height:8.5px;color:#222;transform:scaleX(0.9505);">ft</div>
<div class="t" style="left:434.90px;top:236.60px;font-size:8.5px;line-height:8.5px;color:#222;transform:scaleX(0.8185);">Flow through tank =</div>
<div style="left:502px;top:236px;width:37px;height:11px;background:#fff;border-top:2px solid #8a8a8a;border-left:2px solid #8a8a8a;border-bottom:1px solid #fafafa;border-right:1px solid #fafafa"></div>
<div class="t" style="left:516.60px;top:237.90px;font-size:8.5px;line-height:8.5px;color:#111;transform:scaleX(0.8871);">12</div>
<div class="t" style="left:543.70px;top:236.60px;font-size:8.5px;line-height:8.5px;color:#222;transform:scaleX(0.8098);">mgd</div>
<div style="left:409px;top:387px;width:57px;height:16px;background:#c0c0ff;border-top:1px solid #f4f4ff;border-left:1px solid #f4f4ff;border-bottom:2px solid #6a6a7a;border-right:1px solid #8a8a9a"></div>
<div class="t" style="left:421.60px;top:391.20px;font-size:8.5px;line-height:8.5px;color:#000;transform:scaleX(0.9180);font-weight:700;-webkit-text-stroke:0.05px currentColor;">Evaluate</div>
<div style="left:466px;top:387px;width:57px;height:16px;background:#c0c0ff;border-top:1px solid #f4f4ff;border-left:1px solid #f4f4ff;border-bottom:2px solid #6a6a7a;border-right:1px solid #8a8a9a"></div>
<div class="t" style="left:477.30px;top:391.20px;font-size:8.5px;line-height:8.5px;color:#000;transform:scaleX(0.9323);font-weight:700;-webkit-text-stroke:0.05px currentColor;">New Trial</div>
<div style="left:523px;top:387px;width:58px;height:16px;background:#c0c0ff;border-top:1px solid #f4f4ff;border-left:1px solid #f4f4ff;border-bottom:2px solid #6a6a7a;border-right:1px solid #8a8a9a"></div>
<div class="t" style="left:543.80px;top:391.20px;font-size:8.5px;line-height:8.5px;color:#000;transform:scaleX(0.8740);font-weight:700;-webkit-text-stroke:0.05px currentColor;">Help</div>
</div></body></html>
